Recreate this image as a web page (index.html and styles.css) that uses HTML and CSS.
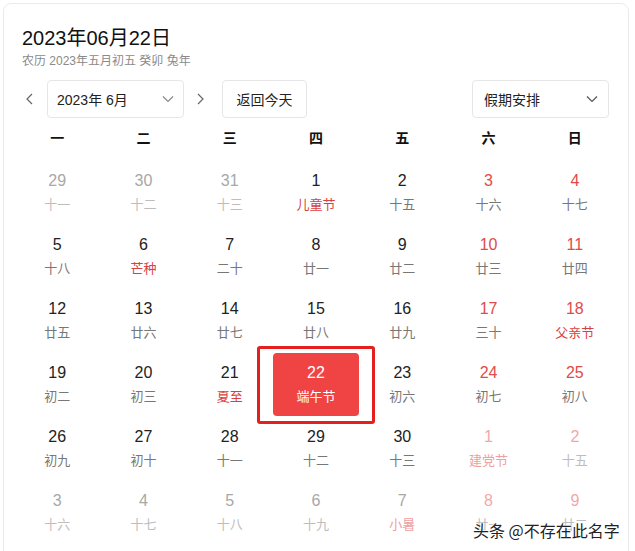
FILE: index.html
```html
<!DOCTYPE html>
<html lang="zh-CN">
<head>
    <meta charset="UTF-8">
    <meta name="viewport" content="width=device-width, initial-scale=1.0">
    <title>万年历</title>
    <link rel="stylesheet" href="styles.css">
</head>
<body>
    <div class="card">
        <div class="head">
            <h1 class="date-title">2023年06月22日</h1>
            <p class="lunar-line">农历 2023年五月初五 癸卯 兔年</p>
        </div>

        <div class="toolbar">
            <div class="month-nav">
                <span class="arrow prev">
                    <svg width="10" height="12" viewBox="0 0 10 12"><path d="M7 1 L2 6 L7 11" fill="none" stroke="#666" stroke-width="1.2"/></svg>
                </span>
                <div class="select month-select">
                    <span>2023年 6月</span>
                    <svg width="12" height="8" viewBox="0 0 12 8"><path d="M1 1.5 L6 6.5 L11 1.5" fill="none" stroke="#888" stroke-width="1.2"/></svg>
                </div>
                <span class="arrow next">
                    <svg width="10" height="12" viewBox="0 0 10 12"><path d="M3 1 L8 6 L3 11" fill="none" stroke="#666" stroke-width="1.2"/></svg>
                </span>
                <button class="today-btn">返回今天</button>
            </div>
            <div class="select holiday-select">
                <span>假期安排</span>
                <svg width="12" height="8" viewBox="0 0 12 8"><path d="M1 1.5 L6 6.5 L11 1.5" fill="none" stroke="#555" stroke-width="1.2"/></svg>
            </div>
        </div>

        <div class="weekdays">
            <span>一</span><span>二</span><span>三</span><span>四</span><span>五</span><span>六</span><span>日</span>
        </div>

        <div class="days">
            <div class="day other"><b>29</b><i>十一</i></div>
            <div class="day other"><b>30</b><i>十二</i></div>
            <div class="day other"><b>31</b><i>十三</i></div>
            <div class="day fest"><b>1</b><i>儿童节</i></div>
            <div class="day"><b>2</b><i>十五</i></div>
            <div class="day weekend"><b>3</b><i>十六</i></div>
            <div class="day weekend"><b>4</b><i>十七</i></div>

            <div class="day"><b>5</b><i>十八</i></div>
            <div class="day fest"><b>6</b><i>芒种</i></div>
            <div class="day"><b>7</b><i>二十</i></div>
            <div class="day"><b>8</b><i>廿一</i></div>
            <div class="day"><b>9</b><i>廿二</i></div>
            <div class="day weekend"><b>10</b><i>廿三</i></div>
            <div class="day weekend"><b>11</b><i>廿四</i></div>

            <div class="day"><b>12</b><i>廿五</i></div>
            <div class="day"><b>13</b><i>廿六</i></div>
            <div class="day"><b>14</b><i>廿七</i></div>
            <div class="day"><b>15</b><i>廿八</i></div>
            <div class="day"><b>16</b><i>廿九</i></div>
            <div class="day weekend"><b>17</b><i>三十</i></div>
            <div class="day weekend fest"><b>18</b><i>父亲节</i></div>

            <div class="day"><b>19</b><i>初二</i></div>
            <div class="day"><b>20</b><i>初三</i></div>
            <div class="day fest"><b>21</b><i>夏至</i></div>
            <div class="day selected"><b>22</b><i>端午节</i><span class="mark"></span></div>
            <div class="day"><b>23</b><i>初六</i></div>
            <div class="day weekend"><b>24</b><i>初七</i></div>
            <div class="day weekend"><b>25</b><i>初八</i></div>

            <div class="day"><b>26</b><i>初九</i></div>
            <div class="day"><b>27</b><i>初十</i></div>
            <div class="day"><b>28</b><i>十一</i></div>
            <div class="day"><b>29</b><i>十二</i></div>
            <div class="day"><b>30</b><i>十三</i></div>
            <div class="day other weekend fest"><b>1</b><i>建党节</i></div>
            <div class="day other weekend"><b>2</b><i>十五</i></div>

            <div class="day other"><b>3</b><i>十六</i></div>
            <div class="day other"><b>4</b><i>十七</i></div>
            <div class="day other"><b>5</b><i>十八</i></div>
            <div class="day other"><b>6</b><i>十九</i></div>
            <div class="day other fest"><b>7</b><i>小暑</i></div>
            <div class="day other weekend"><b>8</b><i>廿一</i></div>
            <div class="day other weekend"><b>9</b><i>廿二</i></div>
        </div>
    </div>

    <div class="watermark">头条 @不存在此名字</div>
</body>
</html>
```

FILE: styles.css
```css
body {
    margin: 0;
    background: #fff;
    font-family: "Liberation Sans", "Noto Sans CJK SC", sans-serif;
    color: #333;
    overflow: hidden;
}

.card {
    margin: 3px 0 0 3px;
    width: 626px;
    height: 600px;
    border: 1px solid #ebebeb;
    border-radius: 8px;
    padding: 21px 0 0 0;
    box-sizing: border-box;
}

.head {
    padding-left: 18px;
}

.date-title {
    margin: 0;
    font-size: 20px;
    font-weight: normal;
    line-height: 26px;
    color: #111;
}

.lunar-line {
    margin: 2px 0 0;
    font-size: 12px;
    line-height: 16px;
    color: #8a8a8a;
}

.toolbar {
    display: flex;
    justify-content: space-between;
    align-items: center;
    margin-top: 11px;
    padding: 0 19px 0 18px;
}

.month-nav {
    display: flex;
    align-items: center;
}

.arrow {
    width: 25px;
    display: flex;
    justify-content: flex-start;
}

.arrow.prev {
    padding-left: 3px;
    width: 22px;
}

.arrow.next {
    padding-left: 11px;
    width: 14px;
}

.select {
    height: 38px;
    width: 137px;
    box-sizing: border-box;
    border: 1px solid #e6e6e6;
    border-radius: 4px;
    display: flex;
    align-items: center;
    justify-content: space-between;
    padding: 0 9px 0 9px;
    font-size: 14px;
    color: #222;
}

.today-btn {
    margin-left: 13px;
    height: 38px;
    width: 85px;
    border: 1px solid #e6e6e6;
    border-radius: 4px;
    background: #fff;
    font-family: inherit;
    font-size: 14px;
    color: #222;
    padding: 0;
}

.holiday-select {
    padding-left: 11px;
    padding-right: 10px;
}

.weekdays {
    display: grid;
    grid-template-columns: repeat(7, 1fr);
    margin: 0 10px;
    height: 40px;
    line-height: 40px;
    text-align: center;
    font-size: 14px;
    font-weight: bold;
    color: #111;
}

.days {
    display: grid;
    grid-template-columns: repeat(7, 1fr);
    grid-auto-rows: 64px;
    margin: 3px 10px 0;
}

.day {
    position: relative;
    display: flex;
    flex-direction: column;
    align-items: center;
    padding-top: 10px;
    box-sizing: border-box;
    height: 63px;
}

.day b {
    font-weight: normal;
    font-size: 16px;
    line-height: 20px;
    color: #222;
}

.day i {
    font-style: normal;
    font-size: 13px;
    line-height: 20px;
    margin-top: 4px;
    color: #777;
}

.day.weekend b {
    color: #e24a4a;
}

.day.fest i {
    color: #d94141;
}

.day.other b {
    color: #a8a8a8;
}

.day.other i {
    color: #bdbdbd;
}

.day.other.weekend b {
    color: #f0a9a9;
}

.day.other.fest i {
    color: #efa0a0;
}

.day.selected {
    background: #f04343;
    border-radius: 4px;
}

.day.selected b,
.day.selected i {
    color: #fff;
}

/* red annotation frame around today */
.mark {
    position: absolute;
    left: -16px;
    top: -7px;
    width: 118px;
    height: 78px;
    box-sizing: border-box;
    border: 3px solid #e3201f;
    border-radius: 3px;
}

.watermark {
    position: absolute;
    left: 473px;
    top: 519px;
    font-family: "Noto Sans CJK SC", sans-serif;
    font-size: 16px;
    line-height: 22px;
    color: #222;
    text-shadow: 0 0 2px #fff, 0 0 2px #fff, 0 0 3px #fff;
}
```
